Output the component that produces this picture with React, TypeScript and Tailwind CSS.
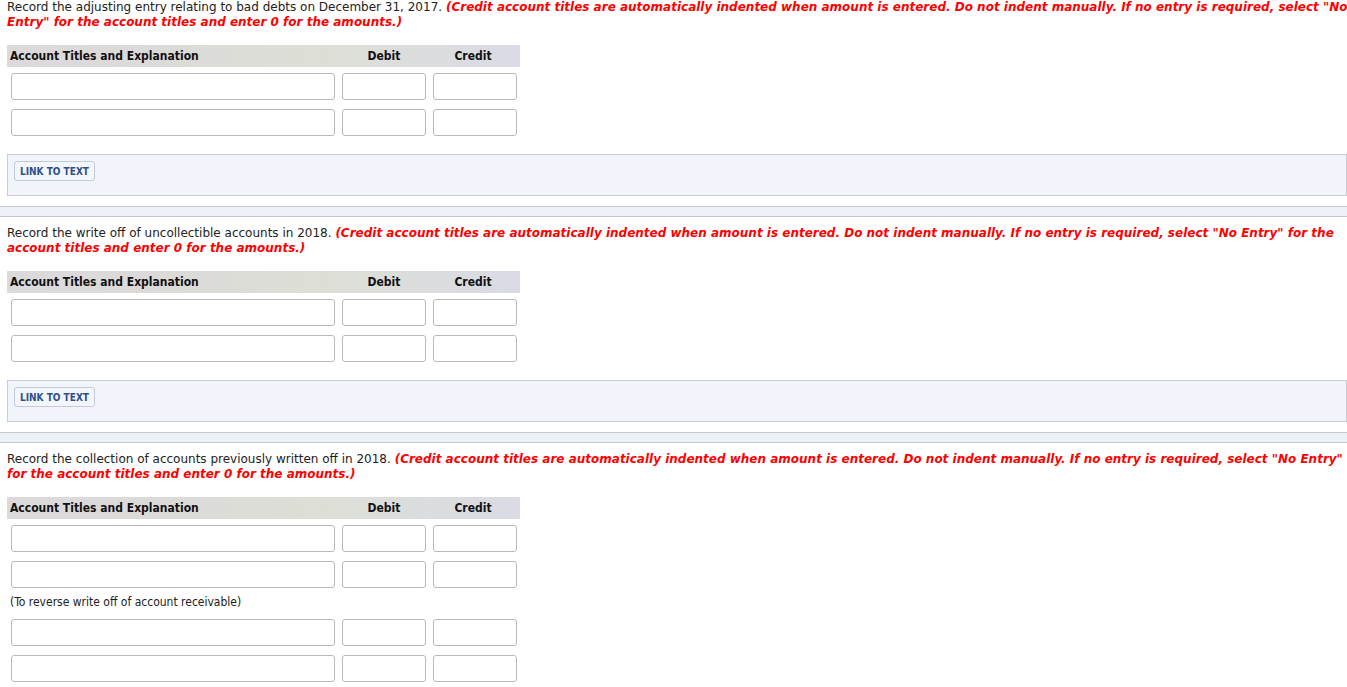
import React from 'react'

const sections = [
  {
    lead: 'Record the adjusting entry relating to bad debts on December 31, 2017.',
    blocks: [{ rows: ['a', 'b'], note: '' }],
    link: true,
  },
  {
    lead: 'Record the write off of uncollectible accounts in 2018.',
    blocks: [{ rows: ['a', 'b'], note: '' }],
    link: true,
  },
  {
    lead: 'Record the collection of accounts previously written off in 2018.',
    blocks: [
      { rows: ['a', 'b'], note: '(To reverse write off of account receivable)' },
      { rows: ['c', 'd'], note: '' },
    ],
    link: false,
  },
]

const hint =
  '(Credit account titles are automatically indented when amount is entered. Do not indent manually. If no entry is required, select "No Entry" for the account titles and enter 0 for the amounts.)'

function Field({ w }: { w: string }) {
  return (
    <input
      type="text"
      className={`${w} h-[27px] rounded-[3px] border border-[#b9b9b9] bg-white outline-none`}
    />
  )
}

function EntryRow() {
  return (
    <div className="flex gap-[7px] pl-[11px]">
      <Field w="w-[324px]" />
      <Field w="w-[84px]" />
      <Field w="w-[84px]" />
    </div>
  )
}

function Header() {
  return (
    <div className="flex h-[22px] w-[513px] items-center bg-[linear-gradient(90deg,#dcd9db_0%,#dbdbd8_35%,#dddfd6_60%,#dadbe5_100%)] text-[12px] font-bold text-[#111] [font-family:Tahoma,'DejaVu_Sans_Condensed','Liberation_Sans',sans-serif]">
      <div className="w-[335px] pl-[3px]">Account Titles and Explanation</div>
      <div className="w-[84px] text-center">Debit</div>
      <div className="w-[94px] text-center">Credit</div>
    </div>
  )
}

export default function App() {
  return (
    <div className="min-h-[687px] w-[1347px] overflow-hidden bg-white text-[12px] [font-family:'DejaVu_Sans',Verdana,sans-serif]">
      {sections.map((s, i) => (
        <div key={i}>
          <p className={`-mr-[6px] pl-[7px] leading-[15px] text-[#222] ${i === 0 ? 'mt-0' : 'mt-[9px]'}`}>
            {s.lead} <span className="font-bold italic text-[#ff0000]">{hint}</span>
          </p>

          <div className="mt-[15px] pl-[7px]">
            <Header />
          </div>

          {s.blocks.map((b, j) => (
            <div key={j}>
              <div className="mt-[6px] flex flex-col gap-[9px]">
                {b.rows.map((r) => (
                  <EntryRow key={r} />
                ))}
              </div>
              {b.note && (
                <p className="mt-[7px] mb-[9px] pl-[10px] text-[12px] leading-[15px] text-[#222] [font-family:Tahoma,'DejaVu_Sans_Condensed',sans-serif]">
                  {b.note}
                </p>
              )}
            </div>
          ))}

          {s.link && (
            <>
              <div className="mt-[18px] ml-[7px] h-[42px] border border-[#c9ccd3] bg-[#f1f4fb] pt-[6px] pl-[6px]">
                <button
                  type="button"
                  className="h-[20px] rounded-[3px] border border-[#c3cad8] bg-[#f3f6fc] px-[5px] text-[10px] font-bold text-[#2e4f8d] [font-family:Tahoma,'DejaVu_Sans_Condensed','Liberation_Sans',sans-serif]"
                >
                  LINK TO TEXT
                </button>
              </div>
              <div className="mt-[10px] h-[11px] border-y border-[#c4c8d0] bg-[#eef1f7]" />
            </>
          )}
        </div>
      ))}
    </div>
  )
}
